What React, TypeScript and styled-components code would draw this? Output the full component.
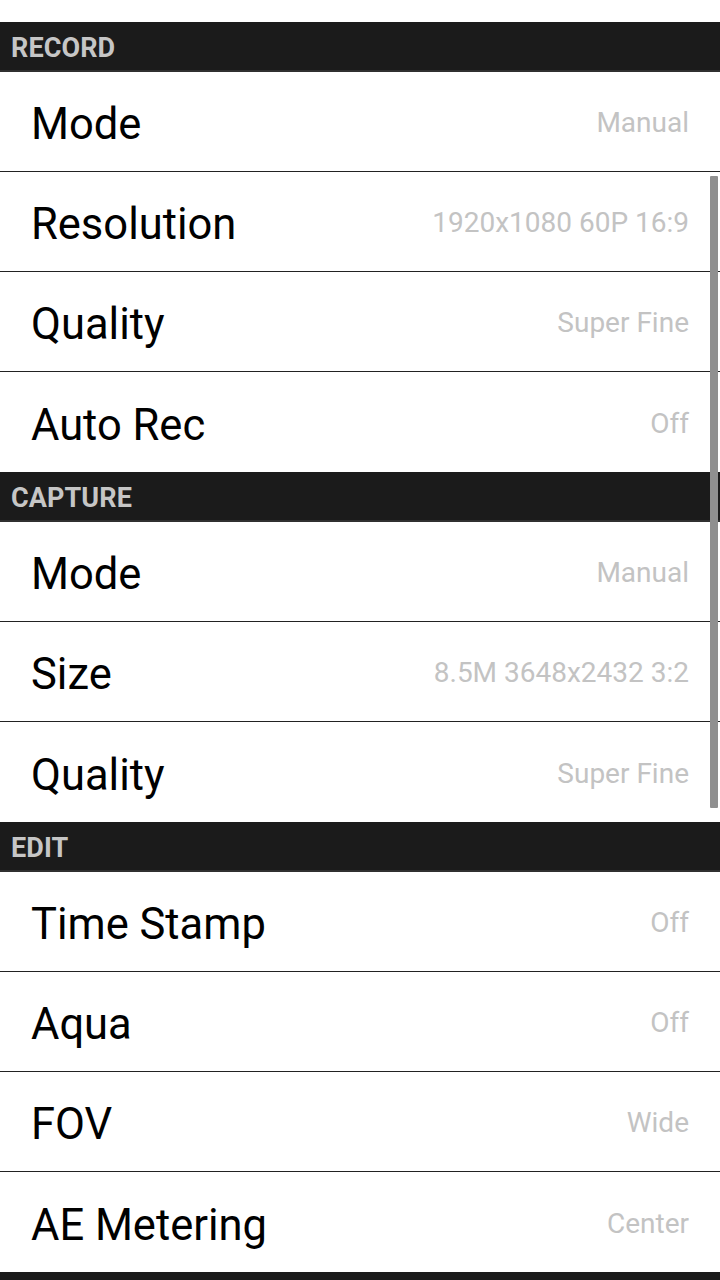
import React from "react";
import styled, { createGlobalStyle } from "styled-components";

const Global = createGlobalStyle`
  html, body { margin: 0; padding: 0; background: #ffffff; }
  body { font-family: Roboto, "Noto Sans", sans-serif; overflow: hidden; }
`;

const Screen = styled.div`
  position: relative;
  width: 720px;
  height: 1280px;
  overflow: hidden;
  background: #ffffff;
  padding-top: 22px;
  box-sizing: border-box;
`;

const List = styled.div`
  display: flex;
  flex-direction: column;
`;

const Header = styled.div`
  height: 50px;
  flex: none;
  background: #1b1b1b;
  border-bottom: 2px solid #303030;
  display: flex;
  align-items: center;
  padding: 4px 0 0 11px;
  box-sizing: border-box;
  font-family: Roboto, sans-serif;
  font-weight: 700;
  font-size: 27px;
  color: #c6c6c6;
  letter-spacing: 0.1px;
`;

const Row = styled.div<{ $last?: boolean }>`
  height: 100px;
  flex: none;
  display: flex;
  align-items: center;
  justify-content: space-between;
  padding: 6px 31px 0 32px;
  box-sizing: border-box;
  border-bottom: ${(p) => (p.$last ? "none" : "1px solid #222222")};
`;

const Label = styled.span`
  font-family: Roboto, sans-serif;
  font-size: 43.5px;
  color: #000000;
  margin-left: -1px;
`;

const Value = styled.span`
  font-family: Roboto, sans-serif;
  font-size: 28px;
  color: #c3c3c3;
  margin-top: -4px;
`;

const ScrollThumb = styled.div`
  position: absolute;
  left: 710px;
  top: 176px;
  width: 8px;
  height: 632px;
  background: #8f8f8f;
  border-radius: 1px;
`;

type Item = { label: string; value: string };
type Section = { title: string; items: Item[] };

const sections: Section[] = [
  {
    title: "RECORD",
    items: [
      { label: "Mode", value: "Manual" },
      { label: "Resolution", value: "1920x1080 60P 16:9" },
      { label: "Quality", value: "Super Fine" },
      { label: "Auto Rec", value: "Off" },
    ],
  },
  {
    title: "CAPTURE",
    items: [
      { label: "Mode", value: "Manual" },
      { label: "Size", value: "8.5M 3648x2432 3:2" },
      { label: "Quality", value: "Super Fine" },
    ],
  },
  {
    title: "EDIT",
    items: [
      { label: "Time Stamp", value: "Off" },
      { label: "Aqua", value: "Off" },
      { label: "FOV", value: "Wide" },
      { label: "AE Metering", value: "Center" },
    ],
  },
];

export default function App() {
  return (
    <Screen>
      <Global />
      <List>
        {sections.map((s) => (
          <React.Fragment key={s.title}>
            <Header>{s.title}</Header>
            {s.items.map((it, i) => (
              <Row key={it.label + i} $last={i === s.items.length - 1}>
                <Label>{it.label}</Label>
                <Value>{it.value}</Value>
              </Row>
            ))}
          </React.Fragment>
        ))}
        <Header />
      </List>
      <ScrollThumb />
    </Screen>
  );
}
